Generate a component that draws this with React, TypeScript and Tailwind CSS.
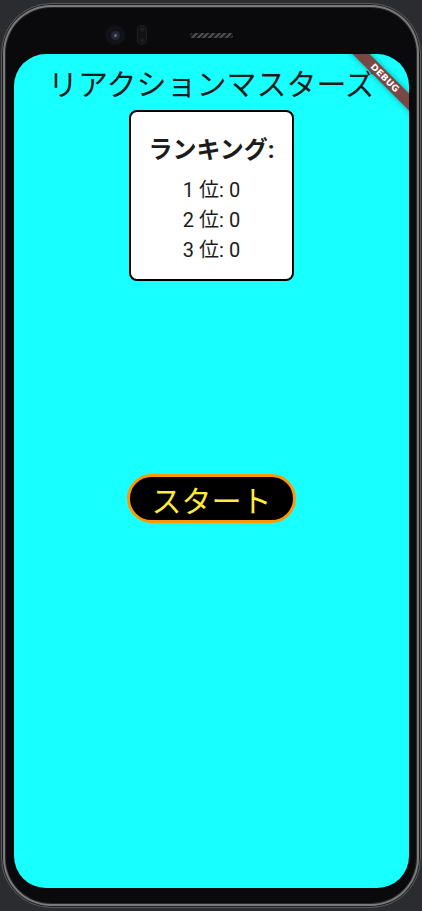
import React from "react";

const ranks = [
  { place: 1, score: 0 },
  { place: 2, score: 0 },
  { place: 3, score: 0 },
];

function DebugBanner() {
  return (
    <div className="pointer-events-none absolute left-[311px] top-[18px] flex h-[12px] w-[120px] rotate-45 items-center justify-center bg-[#7a4747] shadow-[0_0_6px_rgba(0,0,0,0.35)]">
      <span className="font-['DejaVu_Sans'] text-[9px] leading-none font-black tracking-[0.2px] text-white">
        DEBUG
      </span>
    </div>
  );
}

function TopBezel() {
  return (
    <div className="flex h-[50px] items-start pt-[21px] pl-[91px]">
      {/* front camera */}
      <div className="flex h-[20px] w-[20px] items-center justify-center rounded-full bg-[#131317]">
        <div className="flex h-[9px] w-[9px] items-center justify-center rounded-full bg-[#262636]">
          <div className="h-[3px] w-[3px] rounded-full bg-[#6a6a80]" />
        </div>
      </div>
      {/* sensor pill */}
      <div className="ml-[12px] flex h-[20px] w-[10px] flex-col items-center justify-between rounded-full bg-[#111114] py-[2px] shadow-[inset_0_0_0_1px_#1f1f24]">
        <div className="h-[5px] w-[5px] rounded-full bg-[#1b1b20]" />
        <div className="h-[5px] w-[5px] rounded-full bg-[#1b1b20]" />
      </div>
      {/* speaker */}
      <div className="mt-[8px] ml-[43px] h-[5px] w-[43px] rounded-full bg-[repeating-linear-gradient(135deg,#4c4c50_0px,#4c4c50_2px,#18181b_2px,#18181b_4px)]" />
    </div>
  );
}

export default function App() {
  return (
    <div className="h-[911px] w-[422px] overflow-hidden bg-[#2b2c2f] px-[1px] pt-[3px]">
      <div className="flex h-[905px] flex-col rounded-[50px] border border-[#5a5a5c] bg-[#0a090c] pr-[11px] pl-[12px] shadow-[inset_0_0_0_1px_#1c1c1e,inset_0_0_0_3px_#7a7a7c,inset_0_0_0_4px_#2a2a2c]">
        <TopBezel />

        <div className="relative flex h-[834px] flex-col items-center overflow-hidden rounded-[32px] bg-[#18ffff] font-['Roboto','Noto_Sans_CJK_JP',sans-serif] text-[#1c1c1c]">
          <h1 className="pt-[10px] font-['Noto_Sans_CJK_JP',sans-serif] text-[30px] leading-[36px] font-normal">
            リアクションマスターズ
          </h1>

          <div className="mt-[10px] flex h-[171px] w-[165px] flex-col items-center rounded-[8px] border-2 border-black bg-white pt-[22px]">
            <div className="text-[24px] leading-[32px] font-bold">ランキング:</div>
            <div className="mt-[9px] flex flex-col items-center">
              {ranks.map((r) => (
                <div key={r.place} className="text-[20px] leading-[30px]">
                  {r.place} 位: {r.score}
                </div>
              ))}
            </div>
          </div>

          <button className="mt-[193px] flex h-[49px] w-[169px] items-center justify-center rounded-full border-[3px] border-[#ff9800] bg-black font-['Noto_Sans_CJK_JP',sans-serif] text-[30px] leading-none text-[#ffeb3b]">
            スタート
          </button>

          <DebugBanner />
        </div>
      </div>
    </div>
  );
}
